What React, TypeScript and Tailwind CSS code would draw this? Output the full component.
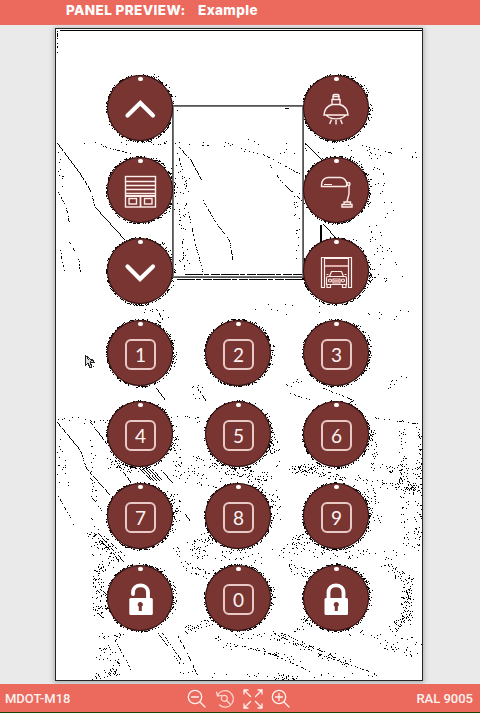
import type { ReactNode } from 'react';

type Point = [number, number];
type Stroke = { pts: Point[]; keep: number };
type Patch = { from: Point; to: Point; spread: number; count: number };

// Small deterministic generator so the grain is the same on every render.
function createRandom(seed: number) {
  let s = seed;
  return () => {
    s = (s * 1664525 + 1013904223) % 4294967296;
    return s / 4294967296;
  };
}

const strokes: Stroke[] = [
  { pts: [[57, 143], [79, 172], [90, 190]], keep: 0.85 },
  { pts: [[90, 190], [95, 208]], keep: 0.5 },
  { pts: [[95, 207], [125, 240]], keep: 1 },
  { pts: [[175, 143], [190, 159], [202, 181]], keep: 0.85 },
  { pts: [[177, 152], [188, 192]], keep: 0.35 },
  { pts: [[202, 199], [216, 223], [229, 240], [233, 262]], keep: 0.7 },
  { pts: [[188, 210], [194, 240], [203, 273]], keep: 0.45 },
  { pts: [[176, 192], [181, 225], [184, 270]], keep: 0.25 },
  { pts: [[240, 148], [265, 155], [300, 174]], keep: 0.4 },
  { pts: [[270, 165], [280, 180], [302, 201]], keep: 0.45 },
  { pts: [[305, 143], [321, 159]], keep: 1 },
  { pts: [[323, 224], [336, 238]], keep: 1 },
  { pts: [[58, 192], [66, 208], [69, 223]], keep: 0.5 },
  { pts: [[69, 242], [78, 257], [80, 272]], keep: 0.5 },
  { pts: [[60, 250], [64, 272]], keep: 0.4 },
  { pts: [[100, 145], [132, 154]], keep: 0.3 },
  { pts: [[362, 145], [392, 153]], keep: 0.35 },
  { pts: [[156, 309], [163, 320]], keep: 0.8 },
  { pts: [[156, 388], [165, 400]], keep: 0.85 },
  { pts: [[197, 387], [206, 401]], keep: 0.85 },
  { pts: [[57, 422], [80, 450], [86, 468], [110, 495]], keep: 0.85 },
  { pts: [[90, 422], [107, 444]], keep: 0.85 },
  { pts: [[115, 460], [131, 483]], keep: 0.85 },
  { pts: [[140, 469], [151, 480]], keep: 0.9 },
  { pts: [[143, 469], [154, 481]], keep: 0.9 },
  { pts: [[146, 469], [157, 481]], keep: 0.9 },
  { pts: [[149, 469], [160, 481]], keep: 0.9 },
  { pts: [[152, 469], [162, 480]], keep: 0.9 },
  { pts: [[160, 469], [173, 483]], keep: 0.9 },
  { pts: [[58, 496], [67, 512], [74, 526]], keep: 0.5 },
  { pts: [[91, 496], [102, 511]], keep: 0.6 },
  { pts: [[94, 534], [112, 552], [120, 562]], keep: 0.7 },
  { pts: [[98, 533], [115, 552], [124, 562]], keep: 0.6 },
  { pts: [[104, 536], [129, 560]], keep: 0.6 },
  { pts: [[184, 513], [190, 521]], keep: 0.8 },
  { pts: [[290, 393], [314, 401]], keep: 0.4 },
  { pts: [[323, 388], [356, 401]], keep: 0.4 },
  { pts: [[372, 417], [421, 424]], keep: 0.35 },
  { pts: [[158, 633], [180, 664]], keep: 0.6 },
  { pts: [[162, 633], [184, 664]], keep: 0.6 },
  { pts: [[176, 633], [188, 655], [197, 675]], keep: 0.55 },
  { pts: [[102, 635], [119, 665]], keep: 0.45 },
  { pts: [[112, 635], [132, 672]], keep: 0.4 },
  { pts: [[273, 633], [322, 655], [375, 673]], keep: 0.45 },
  { pts: [[282, 633], [335, 657]], keep: 0.4 },
  { pts: [[240, 645], [275, 655], [310, 671]], keep: 0.4 },
];

const patches: Patch[] = [
  { from: [57, 142], to: [240, 144], spread: 2, count: 26 },
  { from: [240, 145], to: [420, 155], spread: 7, count: 26 },
  { from: [172, 150], to: [190, 190], spread: 5, count: 8 },
  { from: [181, 190], to: [184, 270], spread: 6, count: 24 },
  { from: [296, 190], to: [297, 256], spread: 3, count: 18 },
  { from: [372, 150], to: [390, 215], spread: 6, count: 22 },
  { from: [172, 165], to: [172, 210], spread: 4, count: 16 },
  { from: [374, 225], to: [380, 290], spread: 8, count: 28 },
  { from: [58, 150], to: [62, 190], spread: 3, count: 10 },
  { from: [386, 245], to: [402, 278], spread: 2, count: 6 },
  { from: [140, 309], to: [170, 313], spread: 4, count: 8 },
  { from: [240, 306], to: [410, 315], spread: 6, count: 18 },
  { from: [196, 380], to: [200, 405], spread: 5, count: 9 },
  { from: [285, 386], to: [300, 380], spread: 3, count: 8 },
  { from: [386, 386], to: [410, 374], spread: 3, count: 10 },
  { from: [57, 418], to: [110, 423], spread: 3, count: 18 },
  { from: [58, 440], to: [64, 500], spread: 6, count: 20 },
  { from: [91, 442], to: [95, 530], spread: 4, count: 26 },
  { from: [110, 463], to: [136, 468], spread: 5, count: 40 },
  { from: [170, 418], to: [204, 420], spread: 3, count: 10 },
  { from: [171, 430], to: [180, 465], spread: 5, count: 22 },
  { from: [170, 470], to: [245, 490], spread: 8, count: 50 },
  { from: [195, 461], to: [270, 480], spread: 6, count: 110 },
  { from: [290, 470], to: [322, 465], spread: 4, count: 50 },
  { from: [300, 470], to: [420, 490], spread: 4, count: 100 },
  { from: [370, 466], to: [420, 472], spread: 4, count: 35 },
  { from: [402, 420], to: [405, 550], spread: 4, count: 75 },
  { from: [419, 427], to: [419, 480], spread: 3, count: 45 },
  { from: [400, 482], to: [420, 490], spread: 6, count: 45 },
  { from: [420, 500], to: [417, 552], spread: 5, count: 45 },
  { from: [272, 430], to: [276, 462], spread: 5, count: 20 },
  { from: [373, 430], to: [375, 462], spread: 3, count: 18 },
  { from: [172, 490], to: [178, 515], spread: 6, count: 24 },
  { from: [272, 490], to: [276, 518], spread: 6, count: 22 },
  { from: [371, 490], to: [377, 522], spread: 6, count: 26 },
  { from: [92, 535], to: [118, 562], spread: 7, count: 60 },
  { from: [98, 558], to: [100, 615], spread: 7, count: 100 },
  { from: [170, 552], to: [265, 558], spread: 5, count: 55 },
  { from: [190, 547], to: [215, 534], spread: 6, count: 40 },
  { from: [288, 548], to: [310, 535], spread: 6, count: 45 },
  { from: [270, 552], to: [410, 555], spread: 5, count: 55 },
  { from: [185, 565], to: [210, 575], spread: 5, count: 30 },
  { from: [290, 565], to: [314, 577], spread: 6, count: 40 },
  { from: [385, 565], to: [409, 580], spread: 5, count: 40 },
  { from: [408, 580], to: [406, 620], spread: 6, count: 90 },
  { from: [408, 615], to: [390, 630], spread: 4, count: 28 },
  { from: [180, 632], to: [212, 620], spread: 4, count: 32 },
  { from: [295, 628], to: [314, 616], spread: 5, count: 34 },
  { from: [215, 635], to: [290, 637], spread: 4, count: 30 },
  { from: [345, 632], to: [420, 641], spread: 4, count: 24 },
  { from: [220, 643], to: [300, 660], spread: 4, count: 40 },
  { from: [380, 644], to: [420, 655], spread: 4, count: 28 },
  { from: [275, 635], to: [350, 664], spread: 4, count: 65 },
  { from: [276, 677], to: [296, 676], spread: 4, count: 35 },
  { from: [92, 678], to: [120, 670], spread: 4, count: 36 },
  { from: [100, 636], to: [122, 636], spread: 3, count: 14 },
  { from: [98, 652], to: [120, 660], spread: 6, count: 24 },
  { from: [180, 674], to: [380, 676], spread: 3, count: 28 },
];

const columns = [140, 238, 336];
const rowCenters = [108, 189.6, 271.2, 352.8, 434.4, 516, 597.6];

function buildGrain() {
  const rand = createRandom(97);
  const out: string[] = [];
  const dot = (x: number, y: number) => {
    const px = Math.round(x);
    const py = Math.round(y);
    if (px > 55 && px < 422 && py > 29 && py < 680) out.push(`M${px} ${py}h1v1h-1z`);
  };
  for (const { pts, keep } of strokes) {
    for (let i = 0; i < pts.length - 1; i++) {
      const [x1, y1] = pts[i];
      const [x2, y2] = pts[i + 1];
      const n = Math.max(Math.abs(x2 - x1), Math.abs(y2 - y1));
      for (let k = 0; k < n; k++) {
        if (rand() < keep) dot(x1 + ((x2 - x1) * k) / n, y1 + ((y2 - y1) * k) / n);
      }
    }
  }
  for (const { from, to, spread, count } of patches) {
    for (let k = 0; k < count; k++) {
      const t = rand();
      dot(
        from[0] + (to[0] - from[0]) * t + (rand() - 0.5) * spread * 2,
        from[1] + (to[1] - from[1]) * t + (rand() - 0.5) * spread * 2,
      );
    }
  }
  rowCenters.forEach((cy, row) => {
    columns.forEach((cx, col) => {
      if (col === 1 && row < 3) return;
      for (let k = 0; k < 190; k++) {
        const a = rand() * Math.PI * 2;
        const r = 32.8 + rand() * 1.5;
        dot(cx + Math.cos(a) * r - 0.2, cy + Math.sin(a) * r);
      }
      for (let k = 0; k < 16; k++) {
        const a = -1.2 + rand() * 1.7;
        const r = 34 + rand() * 3;
        dot(cx + Math.cos(a) * r, cy + Math.sin(a) * r);
      }
    });
  });
  return out.join('');
}

const grain = buildGrain();

function Icon({ children, width = 1.4 }: { children: ReactNode; width?: number }) {
  return (
    <svg viewBox="0 0 66 66" className="absolute inset-0 size-full" fill="none" stroke="#ffeeec" strokeWidth={width}>
      {children}
    </svg>
  );
}

function Key({ children }: { children: ReactNode }) {
  return (
    <div className="relative size-[66px] rounded-full bg-[#783532] ring-1 ring-inset ring-[#2a1010]">
      <div className="mx-auto h-[4px] w-[5px] translate-y-[2px] rounded-full bg-white" />
      {children}
    </div>
  );
}

function Digit({ value }: { value: string }) {
  return (
    <Key>
      <div className="ml-[18px] mt-[15px] flex size-[31px] items-center justify-center rounded-[6px] border-2 border-[#e9c9c6] font-[Lato,sans-serif] text-[19px] leading-none text-[#fff4f2]">
        {value}
      </div>
    </Key>
  );
}

function Shutter() {
  return (
    <Icon>
      <rect x="18.5" y="19.5" width="30" height="30.5" />
      <path d="M19 24.5h29M19 28.5h29M19 32.5h29M19 36.5h29" strokeWidth="1.500" />
      <path d="M19 39h29M33.5 39v11" strokeWidth="1.8" />
      <rect x="22" y="41.5" width="7.500" height="5.5" />
      <rect x="37.5" y="41.5" width="7.500" height="5.5" />
    </Icon>
  );
}

function Pendant() {
  return (
    <Icon>
      <path d="M30 24v-3q0-1.500 1.500-1.500h3q1.500 0 1.500 1.500v3M30 21.500h6M29 24.500h8v5h-8z" />
      <path d="M29 29.500c-5 1.500-7.500 5-8 10.500h24c-.5-5.500-3-9-8-10.500M23.500 40.500c5 4.500 14 4.500 19 0M28.500 44.500l-1.800 4.500M33 45v4.500M37.500 44.500l1.800 4.500" />
    </Icon>
  );
}

function DeskLamp() {
  return (
    <Icon>
      <path d="M18.500 29.500v-1.500c0-4 2.500-7.500 6.500-7.500h12c4 0 6 2.500 7 6.500l-1 2.500z" />
      <path d="M21 27.500h8" strokeWidth="1" />
      <circle cx="45.500" cy="27" r="1.500" />
      <path d="M46 29v8l-2 7.500M41 45h6.500v2.500h-6.500zM39 47.500h10v2.500h-10z" />
    </Icon>
  );
}

function Garage() {
  return (
    <Icon width={1.2}>
      <path d="M18.500 49.500v-30h30v30h-3v-29h-24v29z" />
      <path d="M22 28h23" strokeWidth="1.800" stroke="#f0bdb8" />
      <path d="M26.500 38.500l2-5h10l2 5M25 38.500h17q1.500 0 1.500 1.500v6.500h-20v-6.500q0-1.500 1.500-1.500zM24 46.500v3h3.500v-3M39.500 46.500v3h3.500v-3M30 41h7v4h-7zM23.500 36.500h2M41.500 36.500h2" />
      <circle cx="27" cy="42.500" r="1.500" />
      <circle cx="40" cy="42.500" r="1.500" />
      <path d="M31 43h5" stroke="#e8aaa5" strokeWidth="2" />
    </Icon>
  );
}

function Chevron({ up = false }: { up?: boolean }) {
  return (
    <Icon width={4.2}>
      <path
        d={up ? 'M20.500 40.500L33.300 28L46 40.500' : 'M20.500 28.500L33 41L46 28.500'}
        stroke="white"
        strokeLinecap="round"
        strokeLinejoin="miter"
      />
    </Icon>
  );
}

function Padlock({ open = false }: { open?: boolean }) {
  return (
    <Icon>
      <path
        d={open ? 'M26 29v-1.500c0-9.500 15-9.500 15 0v9' : 'M25.500 36v-8.500c0-9.500 15-9.500 15 0v8.500'}
        stroke="white"
        strokeWidth="3.800"
        strokeLinecap={open ? 'round' : 'butt'}
      />
      <rect x={open ? 22.300 : 21.500} y="33" width="23.500" height="17" rx="1.500" fill="white" stroke="none" />
      <path
        d="M33.300 37a2.500 2.500 0 0 1 1.500 4.600v4.400h-3v-4.400a2.500 2.500 0 0 1 1.500-4.600z"
        fill="#783532"
        stroke="none"
      />
    </Icon>
  );
}

function Tool({ children }: { children: ReactNode }) {
  return (
    <svg viewBox="0 0 20 20" className="size-5" fill="none" stroke="#fff2ef" strokeWidth="1.300" strokeLinecap="round">
      {children}
    </svg>
  );
}

function Toolbar() {
  return (
    <div className="absolute left-[187px] top-[5px] flex gap-[8px]">
      <Tool>
        <circle cx="8" cy="8" r="6.700" />
        <path d="M13 13l5 5M4.500 8h7" />
      </Tool>
      <Tool>
        <path
          d="M2.500 6.500A8.300 8.300 0 1 1 4.500 16M1.500 3l1 4 4-.5"
          stroke="#ffd8d2"
          strokeWidth="1.200"
        />
        <path d="M11.500 11.500l4 4" stroke="#ffd8d2" strokeWidth="1.200" />
        <circle cx="9.300" cy="9.300" r="3" stroke="#ffd8d2" strokeWidth="1.200" />
      </Tool>
      <Tool>
        <path d="M7.500 7.500L1.500 1.500M1 5V1h4M12.500 7.500l6-6M15 1h4v4M7.500 12.500l-6 6M1 15v4h4M12.500 12.500l6 6M15 19h4v-4" />
      </Tool>
      <Tool>
        <circle cx="8" cy="8" r="6.700" />
        <path d="M13 13l5 5M4.500 8h7M8 4.500v7" />
      </Tool>
    </div>
  );
}

export default function App() {
  return (
    <div className="flex h-[713px] w-[480px] flex-col overflow-hidden bg-[#eaeaea]">
      <header className="flex h-[25px] shrink-0 items-start bg-[#ec695d] pl-[66px] pt-[1px] font-[Inter,sans-serif] text-[13.5px] font-extrabold leading-[18px] text-white">
        <span className="w-[132px] whitespace-nowrap tracking-[0.4px]">PANEL PREVIEW:</span>
        <span className="whitespace-nowrap tracking-[0.4px]">Example</span>
      </header>

      <main className="h-[659px] shrink-0 pl-[55px] pt-[3px]">
        <section className="relative h-[653px] w-[368px] border border-[#252525] bg-white shadow-[0_1px_5px_1px_#aaa]">
          <svg
            viewBox="55 28 368 653"
            className="absolute -left-px -top-px h-[653px] w-[368px]"
            shapeRendering="crispEdges"
          >
            <path d={grain} fill="black" />
            <path
              d="M60 30h362v1H60zM57 31h1v1h-1zM57 33h1v4h-1zM57 38h1v1h-1zM57 43h1v1h-1zM57 46h1v2h-1zM57 52h1v1h-1zM320 225h2v17h-2zM285 108h4v1h-4z"
              fill="black"
            />
            <path d="M185 274.500h117M177 279.500h126" stroke="black" strokeDasharray="18 1 5 2 9 1" />
          </svg>

          <div className="relative ml-[51px] mt-[46px] grid grid-cols-[66px_66px_66px] gap-x-[32px] gap-y-[15.6px]">
            <Key><Chevron up /></Key>
            <div className="row-span-3 -ml-[33px] -mr-[33px] mb-[26px] mt-[30px] border-2 border-[#777] outline-1 -outline-offset-1 outline-[#555]" />
            <Key><Pendant /></Key>
            <Key><Shutter /></Key>
            <Key><DeskLamp /></Key>
            <Key><Chevron /></Key>
            <Key><Garage /></Key>
            {['1', '2', '3', '4', '5', '6', '7', '8', '9'].map((n) => (
              <Digit key={n} value={n} />
            ))}
            <Key><Padlock open /></Key>
            <Digit value="0" />
            <Key><Padlock /></Key>
          </div>

          <svg viewBox="0 0 12 15" className="absolute left-[28px] top-[325px] h-[15px] w-[12px]" shapeRendering="crispEdges">
            <path d="M1 1v11l3-3 2 5 2-1-2-5h4z" fill="#ddd" stroke="#222" strokeWidth="1" />
            <path d="M3 4l5 5M8 5l3 3M7 12h4" stroke="#222" strokeDasharray="1 1" />
          </svg>
        </section>
      </main>

      <footer className="relative flex h-[28px] shrink-0 items-center justify-between bg-[#ec695d] pl-[5px] pr-[7px] pt-[2px] font-[Roboto,sans-serif] text-[13px] font-medium text-[#fff3f0]">
        <span>MDOT-M18</span>
        <Toolbar />
        <span>RAL 9005</span>
      </footer>
      <div className="h-px shrink-0 bg-[#174400]" />
    </div>
  );
}
